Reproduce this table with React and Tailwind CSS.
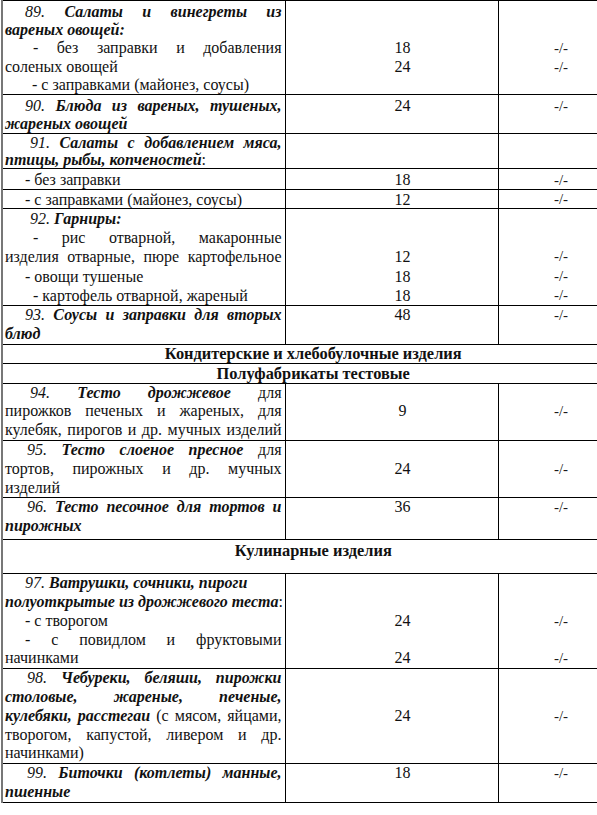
function L({ j, pl = '', children }) {
  return (
    <div className={`whitespace-nowrap ${j ? 'text-justify [text-align-last:justify]' : 'text-left'} ${pl}`}>
      {children}
    </div>
  );
}

function Num({ lines, dim }) {
  return (
    <div className={dim ? 'text-[15px] text-[#1a1a1a]' : ''}>
      {lines.map((l, i) => (
        <div key={i}>{l || '\u00a0'}</div>
      ))}
    </div>
  );
}

function Item({ h, lh = 'leading-[18.8px]', pt = '', children, c2, c3 }) {
  return (
    <tr style={{ height: h }} className={lh}>
      <td className={`border border-black border-l-2 border-l-[#777] align-top pl-[2px] pr-[3px] ${pt}`}>{children}</td>
      <td className={`border border-black align-top text-center pl-[22px] ${pt}`}>
        <Num lines={c2} />
      </td>
      <td className={`border border-black align-top text-center ${pt}`}>
        <Num lines={c3} dim />
      </td>
    </tr>
  );
}

function Section({ h, children, extra = '' }) {
  return (
    <tr style={{ height: h }}>
      <td
        colSpan={3}
        className={`border border-black border-l-2 border-l-[#777] align-top text-center font-bold text-[16.4px] leading-[18px] ${extra}`}
      >
        {children}
      </td>
    </tr>
  );
}

const BI = ({ children }) => (
  <b>
    <i>{children}</i>
  </b>
);

export default function App() {
  return (
    <div className="w-[597px] h-[815px] overflow-hidden bg-white pl-[1px] font-[family-name:'Liberation_Serif',serif] text-[16px] text-[#111]">
      <table className="table-fixed border-collapse w-[622px]">
        <colgroup>
          <col className="w-[283px]" />
          <col className="w-[213px]" />
          <col className="w-[126px]" />
        </colgroup>
        <tbody>
          <Item h={94} lh="leading-[18.2px]" pt="pt-[2px]" c2={['', '', '18', '24']} c3={['', '', '-/-', '-/-']}>
            <L j pl="pl-[20px]">
              <i>89.</i> <BI>Салаты и винегреты из</BI>
            </L>
            <L>
              <BI>вареных овощей:</BI>
            </L>
            <L j pl="pl-[28px]">- без заправки и добавления</L>
            <L>соленых овощей</L>
            <L pl="pl-[27px]">- с заправками (майонез, соусы)</L>
          </Item>
          <Item h={39} lh="leading-[18px]" pt="pt-[2px]" c2={['24']} c3={['-/-']}>
            <L j pl="pl-[20px]">
              <i>90.</i> <BI>Блюда из вареных, тушеных,</BI>
            </L>
            <L>
              <BI>жареных овощей</BI>
            </L>
          </Item>
          <Item h={35} lh="leading-[16.5px]" pt="pt-[1px]" c2={['']} c3={['']}>
            <L j pl="pl-[25px]">
              <i>91.</i> <BI>Салаты с добавлением мяса,</BI>
            </L>
            <L>
              <BI>птицы, рыбы, копченостей</BI>:
            </L>
          </Item>
          <Item h={21} lh="leading-[18px]" pt="pt-[2px]" c2={['18']} c3={['-/-']}>
            <L pl="pl-[20px]">- без заправки</L>
          </Item>
          <Item h={19} lh="leading-[17px]" pt="pt-[1px]" c2={['12']} c3={['-/-']}>
            <L pl="pl-[20px]">- с заправками (майонез, соусы)</L>
          </Item>
          <Item h={96} lh="leading-[19.2px]" c2={['', '', '12', '18', '18']} c3={['', '', '-/-', '-/-', '-/-']}>
            <L pl="pl-[25px]">
              <i>92.</i> <BI>Гарниры:</BI>
            </L>
            <L j pl="pl-[28px]">- рис отварной, макаронные</L>
            <L j>изделия отварные, пюре картофельное</L>
            <L pl="pl-[20px]">- овощи тушеные</L>
            <L pl="pl-[28px]">- картофель отварной, жареный</L>
          </Item>
          <Item h={38} c2={['48']} c3={['-/-']}>
            <L j pl="pl-[20px]">
              <i>93.</i> <BI>Соусы и заправки для вторых</BI>
            </L>
            <L>
              <BI>блюд</BI>
            </L>
          </Item>
          <Section h={19}>Кондитерские и хлебобулочные изделия</Section>
          <Section h={20} extra="pt-[1px]">
            Полуфабрикаты тестовые
          </Section>
          <Item h={57} c2={['', '9']} c3={['', '-/-']}>
            <L j pl="pl-[25px]">
              <i>94.</i> <BI>Тесто</BI> <BI>дрожжевое</BI> для
            </L>
            <L j>пирожков печеных и жареных, для</L>
            <L j>кулебяк, пирогов и др. мучных изделий</L>
          </Item>
          <Item h={57} c2={['', '24']} c3={['', '-/-']}>
            <L j pl="pl-[22px]">
              <i>95.</i> <BI>Тесто слоеное пресное</BI> для
            </L>
            <L j>тортов, пирожных и др. мучных</L>
            <L>изделий</L>
          </Item>
          <Item h={42} c2={['36']} c3={['-/-']}>
            <L j pl="pl-[22px]">
              <i>96.</i> <BI>Тесто песочное для тортов и</BI>
            </L>
            <L>
              <BI>пирожных</BI>
            </L>
          </Item>
          <Section h={34} extra="pt-[2px]">
            Кулинарные изделия
          </Section>
          <Item h={95} lh="leading-[18.75px]" c2={['', '', '24', '', '24']} c3={['', '', '-/-', '', '-/-']}>
            <L pl="pl-[20px]">
              <i>97.</i> <BI>Ватрушки, сочники, пироги</BI>
            </L>
            <L j>
              <BI>полуоткрытые из дрожжевого теста</BI>:
            </L>
            <L pl="pl-[20px]">- с творогом</L>
            <L j pl="pl-[20px]">- с повидлом и фруктовыми</L>
            <L>начинками</L>
          </Item>
          <Item h={95} lh="leading-[18.75px]" c2={['', '', '24']} c3={['', '', '-/-']}>
            <L j pl="pl-[22px]">
              <i>98.</i> <BI>Чебуреки, беляши, пирожки</BI>
            </L>
            <L j>
              <BI>столовые, жареные, печеные,</BI>
            </L>
            <L j>
              <BI>кулебяки, расстегаи</BI> (с мясом, яйцами,
            </L>
            <L j>творогом, капустой, ливером и др.</L>
            <L>начинками)</L>
          </Item>
          <Item h={38} c2={['18']} c3={['-/-']}>
            <L j pl="pl-[22px]">
              <i>99.</i> <BI>Биточки (котлеты) манные,</BI>
            </L>
            <L>
              <BI>пшенные</BI>
            </L>
          </Item>
        </tbody>
      </table>
    </div>
  );
}
